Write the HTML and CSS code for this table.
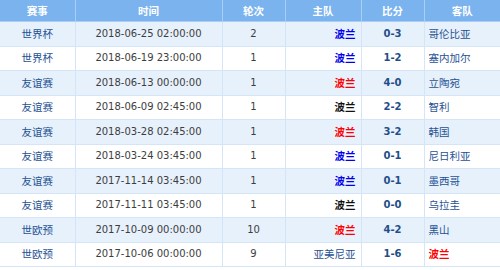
FILE: index.html
```html
<!DOCTYPE html>
<html>
<head>
<meta charset="utf-8">
<link rel="stylesheet" href="styles.css">
</head>
<body>
<table class="matches">
  <colgroup>
    <col class="c-league"><col class="c-time"><col class="c-round"><col class="c-home"><col class="c-score"><col class="c-away">
  </colgroup>
  <thead>
    <tr><th>赛事</th><th>时间</th><th>轮次</th><th>主队</th><th>比分</th><th>客队</th></tr>
  </thead>
  <tbody>
    <tr><td class="league">世界杯</td><td class="time">2018-06-25 02:00:00</td><td class="round">2</td><td class="home"><b class="blue">波兰</b></td><td class="score">0-3</td><td class="away">哥伦比亚</td></tr>
    <tr><td class="league">世界杯</td><td class="time">2018-06-19 23:00:00</td><td class="round">1</td><td class="home"><b class="blue">波兰</b></td><td class="score">1-2</td><td class="away">塞内加尔</td></tr>
    <tr><td class="league">友谊赛</td><td class="time">2018-06-13 00:00:00</td><td class="round">1</td><td class="home"><b class="red">波兰</b></td><td class="score">4-0</td><td class="away">立陶宛</td></tr>
    <tr><td class="league">友谊赛</td><td class="time">2018-06-09 02:45:00</td><td class="round">1</td><td class="home"><b class="black">波兰</b></td><td class="score">2-2</td><td class="away">智利</td></tr>
    <tr><td class="league">友谊赛</td><td class="time">2018-03-28 02:45:00</td><td class="round">1</td><td class="home"><b class="red">波兰</b></td><td class="score">3-2</td><td class="away">韩国</td></tr>
    <tr><td class="league">友谊赛</td><td class="time">2018-03-24 03:45:00</td><td class="round">1</td><td class="home"><b class="blue">波兰</b></td><td class="score">0-1</td><td class="away">尼日利亚</td></tr>
    <tr><td class="league">友谊赛</td><td class="time">2017-11-14 03:45:00</td><td class="round">1</td><td class="home"><b class="blue">波兰</b></td><td class="score">0-1</td><td class="away">墨西哥</td></tr>
    <tr><td class="league">友谊赛</td><td class="time">2017-11-11 03:45:00</td><td class="round">1</td><td class="home"><b class="black">波兰</b></td><td class="score">0-0</td><td class="away">乌拉圭</td></tr>
    <tr><td class="league">世欧预</td><td class="time">2017-10-09 00:00:00</td><td class="round">10</td><td class="home"><b class="red">波兰</b></td><td class="score">4-2</td><td class="away">黑山</td></tr>
    <tr><td class="league">世欧预</td><td class="time">2017-10-06 00:00:00</td><td class="round">9</td><td class="home">亚美尼亚</td><td class="score">1-6</td><td class="away"><b class="red">波兰</b></td></tr>
  </tbody>
</table>
</body>
</html>
```
FILE: styles.css
```css
html, body {
  margin: 0;
  padding: 0;
  background: #ffffff;
}
body {
  font-family: "DejaVu Sans", "Noto Sans CJK SC", sans-serif;
  font-size: 10px;
  color: #333;
}
.matches {
  width: 500px;
  border-collapse: collapse;
  table-layout: fixed;
}
.c-league { width: 75px; }
.c-time { width: 147px; }
.c-round { width: 63px; }
.c-home { width: 76px; }
.c-score { width: 63px; }
.c-away { width: 76px; }
.matches th {
  height: 21px;
  padding: 0;
  background: #7ab3ed;
  color: #ffffff;
  font-weight: bold;
  font-family: "Noto Sans CJK SC", sans-serif;
  font-size: 10.5px;
  line-height: 12px;
  border-left: 1px solid #a9cdf4;
  border-bottom: 1px solid #a9cdf4;
  text-align: center;
}
.matches th:first-child { border-left: none; }
.matches td {
  height: 23.5px;
  padding: 0;
  line-height: 12px;
  border-left: 1px solid #d4e5f8;
  border-bottom: 1px solid #d4e5f8;
  text-align: center;
  white-space: nowrap;
}
.matches td:first-child { border-left: none; }
.matches tbody tr:nth-child(odd) td { background: #e7f1fc; }
.matches tbody tr:nth-child(even) td { background: #ffffff; }
.league {
  color: #1f5193;
  font-family: "Noto Sans CJK SC", sans-serif;
  font-size: 10.5px;
}
.time { color: #3d3d3d; }
.round { color: #3d3d3d; }
.home {
  text-align: right !important;
  padding-right: 5px !important;
  color: #1f5193;
  font-family: "Noto Sans CJK SC", sans-serif;
  font-size: 10.5px;
}
.away {
  text-align: left !important;
  padding-left: 4px !important;
  color: #1f5193;
  font-family: "Noto Sans CJK SC", sans-serif;
  font-size: 10.5px;
}
.score {
  color: #1f4f88;
  font-weight: bold;
}
.blue { color: #0000ee; }
.red { color: #ff0000; }
.black { color: #111111; }
```
